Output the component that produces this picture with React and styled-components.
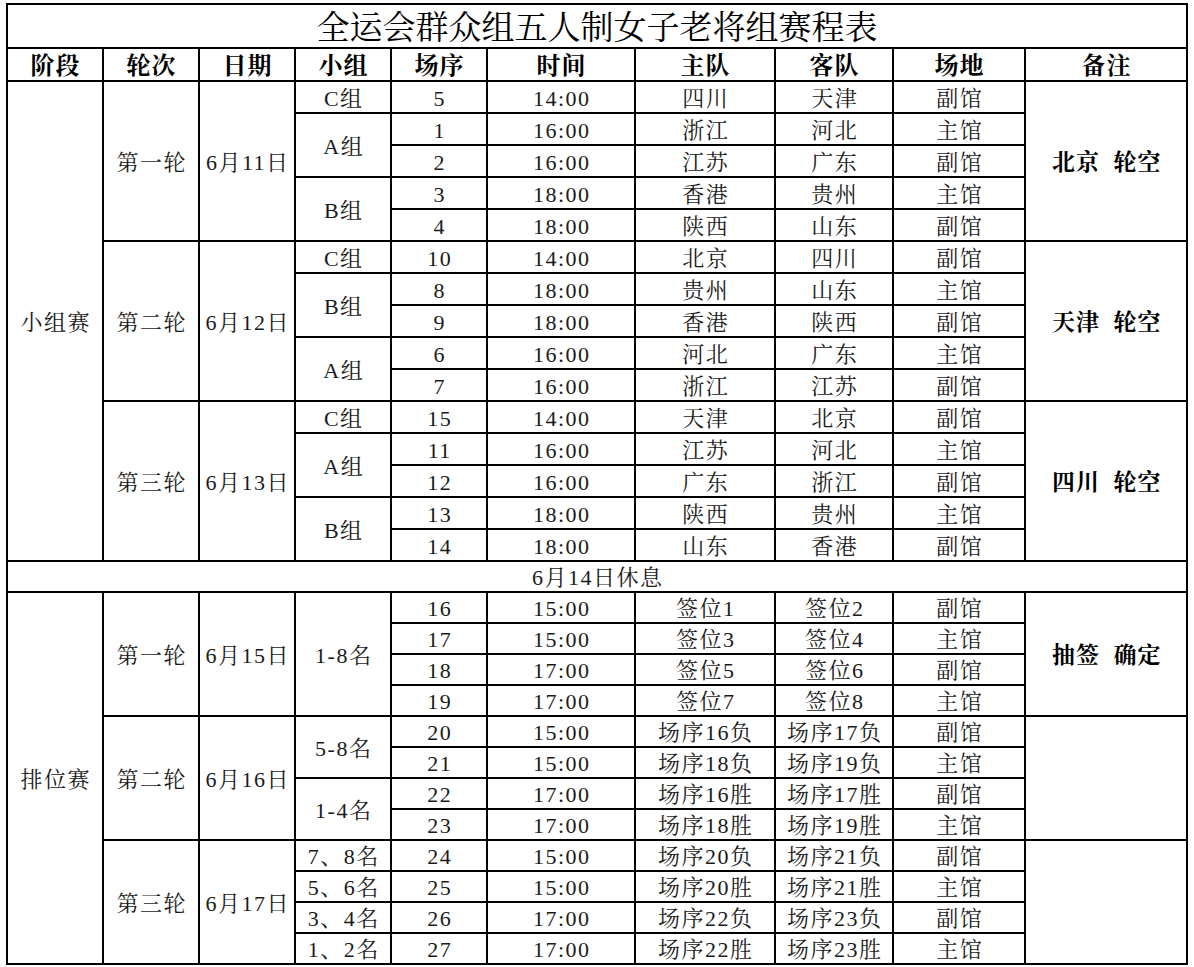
import React from "react"
import styled, { createGlobalStyle } from "styled-components"

const GlobalStyle = createGlobalStyle`
  html, body {
    margin: 0;
    padding: 0;
    background: #fff;
  }
  body {
    font-family: "Liberation Serif", "Noto Serif CJK SC", "Noto Sans CJK SC", serif;
    color: #111;
  }
`

const Page = styled.div`
  padding: 3px 0 0 6px;
`

const Sheet = styled.table`
  border-collapse: collapse;
  table-layout: fixed;
  width: 1182px;
`

const Row = styled.tr`
  height: ${(p) => p.$h || 32}px;
`

const Cell = styled.td`
  border: 2px solid #000;
  padding: 3px 0 0 1.5px;
  text-align: center;
  vertical-align: middle;
  font-size: 22px;
  letter-spacing: 1.5px;
  line-height: 1;
  white-space: pre;
  color: #1a1a1a;
  overflow: hidden;
`

const NoteCell = styled(Cell)`
  font-weight: bold;
  font-size: 23px;
  letter-spacing: 1px;
  color: #000;
`

const HeadCell = styled.th`
  border: 2px solid #000;
  padding: 2px 0 0 1px;
  font-size: 24px;
  letter-spacing: 1px;
  font-weight: bold;
  line-height: 1;
  color: #000;
  text-align: center;
  vertical-align: middle;
`

const TitleCell = styled.th`
  border: 2px solid #000;
  padding: 4px 0 0;
  font-size: 33px;
  font-weight: normal;
  line-height: 1;
  color: #000;
  text-align: center;
  vertical-align: middle;
`

const widths = [96, 96, 96, 96, 96, 148, 140, 118, 132, 162]
const heads = ["阶段", "轮次", "日期", "小组", "场序", "时间", "主队", "客队", "场地", "备注"]

const stages = [
  {
    name: "小组赛",
    rowH: 32,
    rounds: [
      {
        round: "第一轮",
        date: "6月11日",
        note: "北京  轮空",
        groups: [
          { name: "C组", games: [["5", "14:00", "四川", "天津", "副馆"]] },
          {
            name: "A组",
            games: [
              ["1", "16:00", "浙江", "河北", "主馆"],
              ["2", "16:00", "江苏", "广东", "副馆"],
            ],
          },
          {
            name: "B组",
            games: [
              ["3", "18:00", "香港", "贵州", "主馆"],
              ["4", "18:00", "陕西", "山东", "副馆"],
            ],
          },
        ],
      },
      {
        round: "第二轮",
        date: "6月12日",
        note: "天津  轮空",
        groups: [
          { name: "C组", games: [["10", "14:00", "北京", "四川", "副馆"]] },
          {
            name: "B组",
            games: [
              ["8", "18:00", "贵州", "山东", "主馆"],
              ["9", "18:00", "香港", "陕西", "副馆"],
            ],
          },
          {
            name: "A组",
            games: [
              ["6", "16:00", "河北", "广东", "主馆"],
              ["7", "16:00", "浙江", "江苏", "副馆"],
            ],
          },
        ],
      },
      {
        round: "第三轮",
        date: "6月13日",
        note: "四川  轮空",
        groups: [
          { name: "C组", games: [["15", "14:00", "天津", "北京", "副馆"]] },
          {
            name: "A组",
            games: [
              ["11", "16:00", "江苏", "河北", "主馆"],
              ["12", "16:00", "广东", "浙江", "副馆"],
            ],
          },
          {
            name: "B组",
            games: [
              ["13", "18:00", "陕西", "贵州", "主馆"],
              ["14", "18:00", "山东", "香港", "副馆"],
            ],
          },
        ],
      },
    ],
  },
  {
    name: "排位赛",
    rowH: 31,
    rounds: [
      {
        round: "第一轮",
        date: "6月15日",
        note: "抽签  确定",
        groups: [
          {
            name: "1-8名",
            games: [
              ["16", "15:00", "签位1", "签位2", "副馆"],
              ["17", "15:00", "签位3", "签位4", "主馆"],
              ["18", "17:00", "签位5", "签位6", "副馆"],
              ["19", "17:00", "签位7", "签位8", "主馆"],
            ],
          },
        ],
      },
      {
        round: "第二轮",
        date: "6月16日",
        note: "",
        groups: [
          {
            name: "5-8名",
            games: [
              ["20", "15:00", "场序16负", "场序17负", "副馆"],
              ["21", "15:00", "场序18负", "场序19负", "主馆"],
            ],
          },
          {
            name: "1-4名",
            games: [
              ["22", "17:00", "场序16胜", "场序17胜", "副馆"],
              ["23", "17:00", "场序18胜", "场序19胜", "主馆"],
            ],
          },
        ],
      },
      {
        round: "第三轮",
        date: "6月17日",
        note: "",
        groups: [
          { name: "7、8名", games: [["24", "15:00", "场序20负", "场序21负", "副馆"]] },
          { name: "5、6名", games: [["25", "15:00", "场序20胜", "场序21胜", "主馆"]] },
          { name: "3、4名", games: [["26", "17:00", "场序22负", "场序23负", "副馆"]] },
          { name: "1、2名", games: [["27", "17:00", "场序22胜", "场序23胜", "主馆"]] },
        ],
      },
    ],
  },
]

const countRound = (r) => r.groups.reduce((n, g) => n + g.games.length, 0)

function StageRows({ stage }) {
  const total = stage.rounds.reduce((n, r) => n + countRound(r), 0)
  const rows = []
  stage.rounds.forEach((r, ri) => {
    const span = countRound(r)
    let first = true
    r.groups.forEach((g, gi) => {
      g.games.forEach((game, k) => {
        rows.push(
          <Row key={`${ri}-${gi}-${k}`} $h={stage.rowH}>
            {ri === 0 && first && <Cell rowSpan={total}>{stage.name}</Cell>}
            {first && <Cell rowSpan={span}>{r.round}</Cell>}
            {first && <Cell rowSpan={span}>{r.date}</Cell>}
            {k === 0 && <Cell rowSpan={g.games.length}>{g.name}</Cell>}
            {game.map((v, i) => (
              <Cell key={i}>{v}</Cell>
            ))}
            {first && <NoteCell rowSpan={span}>{r.note}</NoteCell>}
          </Row>
        )
        first = false
      })
    })
  })
  return rows
}

export default function App() {
  return (
    <Page>
      <GlobalStyle />
      <Sheet>
        <colgroup>
          {widths.map((w, i) => (
            <col key={i} style={{ width: w }} />
          ))}
        </colgroup>
        <thead>
          <Row $h={44}>
            <TitleCell colSpan={10}>全运会群众组五人制女子老将组赛程表</TitleCell>
          </Row>
          <Row $h={33}>
            {heads.map((h) => (
              <HeadCell key={h}>{h}</HeadCell>
            ))}
          </Row>
        </thead>
        <tbody>
          <StageRows stage={stages[0]} />
          <Row $h={31}>
            <Cell colSpan={10}>6月14日休息</Cell>
          </Row>
          <StageRows stage={stages[1]} />
        </tbody>
      </Sheet>
    </Page>
  )
}
